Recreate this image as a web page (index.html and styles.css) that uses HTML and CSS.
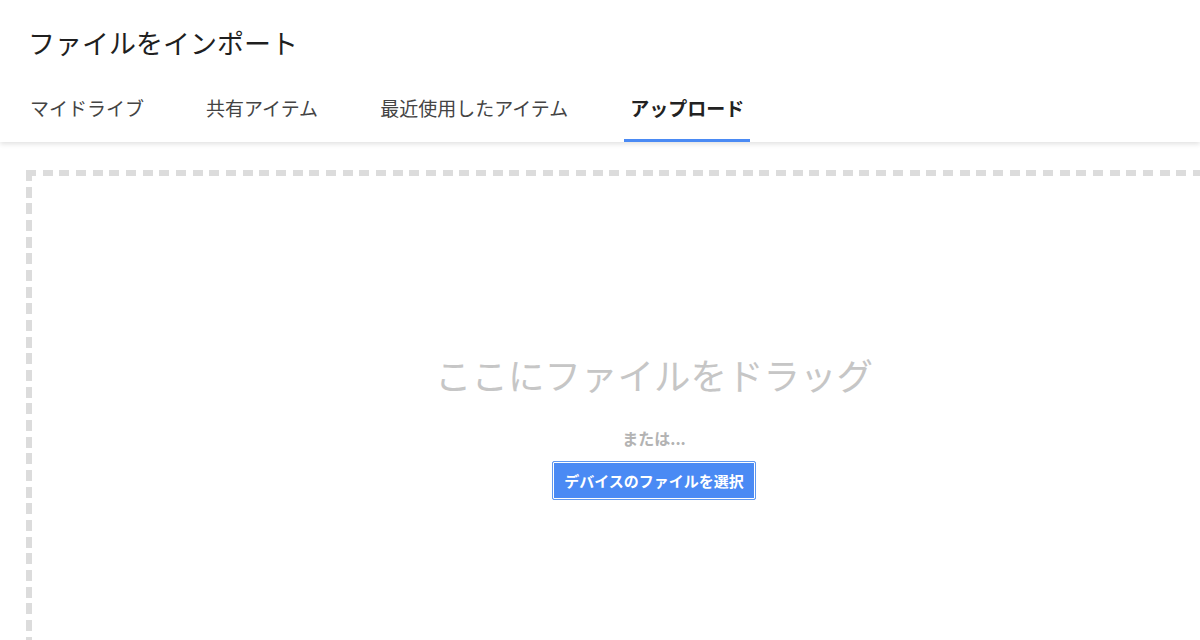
FILE: index.html
```html
<!DOCTYPE html>
<html lang="ja">
<head>
<meta charset="utf-8">
<title>ファイルをインポート</title>
<link rel="stylesheet" href="styles.css">
</head>
<body>
<header class="header">
  <h1 class="title">ファイルをインポート</h1>
  <nav class="tabs">
    <div class="tab">マイドライブ</div>
    <div class="tab">共有アイテム</div>
    <div class="tab">最近使用したアイテム</div>
    <div class="tab active">アップロード</div>
  </nav>
</header>
<main class="main">
  <div class="dropzone">
    <div class="drag-text">ここにファイルをドラッグ</div>
    <div class="or-text">または...</div>
    <button class="select-btn">デバイスのファイルを選択</button>
  </div>
</main>
</body>
</html>
```

FILE: styles.css
```css
html, body {
  margin: 0;
  padding: 0;
  width: 1200px;
  height: 640px;
  overflow: hidden;
  background: #fff;
  font-family: "Noto Sans CJK JP", "Noto Sans", sans-serif;
}

.header {
  position: relative;
  z-index: 1;
  background: #fff;
  padding-top: 25px;
  box-shadow: 0 2px 5px rgba(0, 0, 0, 0.12);
}

.title {
  margin: 0;
  padding-left: 28px;
  font-size: 27px;
  line-height: 36px;
  font-weight: 400;
  color: #1f1f1f;
}

.tabs {
  display: flex;
  gap: 50px;
  margin-top: 21px;
  padding-left: 24px;
}

.tab {
  padding: 14px 6px 19px;
  font-size: 19px;
  line-height: 24px;
  color: #444;
  border-bottom: 3px solid transparent;
  white-space: nowrap;
}

.tab.active {
  font-weight: 700;
  color: #222;
  border-bottom-color: #4a8af4;
}

.main {
  height: 498px;
  overflow: hidden;
  padding: 28px 0 0 26px;
  box-sizing: border-box;
}

.dropzone {
  box-sizing: border-box;
  width: 1256px;
  height: 620px;
  padding-top: 183px;
  display: flex;
  flex-direction: column;
  align-items: center;
  background:
    repeating-linear-gradient(90deg, #dcdcdc 0 10px, transparent 10px 16.67px) left top / 100% 6px no-repeat,
    repeating-linear-gradient(180deg, #dcdcdc 0 11px, transparent 11px 16.67px) left top / 6px 100% no-repeat,
    repeating-linear-gradient(90deg, #dcdcdc 0 10px, transparent 10px 16.67px) left bottom / 100% 6px no-repeat,
    repeating-linear-gradient(180deg, #dcdcdc 0 11px, transparent 11px 16.67px) right top / 6px 100% no-repeat;
}

.drag-text {
  font-size: 36.5px;
  line-height: 44px;
  color: #c6c6c6;
  white-space: nowrap;
}

.or-text {
  margin-top: 30px;
  font-size: 16px;
  line-height: 22px;
  font-weight: 700;
  color: #b3b3b3;
}

.select-btn {
  margin-top: 12px;
  height: 39px;
  padding: 0 11px;
  font-family: inherit;
  font-size: 15px;
  font-weight: 700;
  color: #fff;
  background: #4a8af4;
  border: 1px solid #5f97ee;
  border-radius: 2px;
  box-shadow: inset 0 0 0 1px #fff;
  cursor: pointer;
}
```
